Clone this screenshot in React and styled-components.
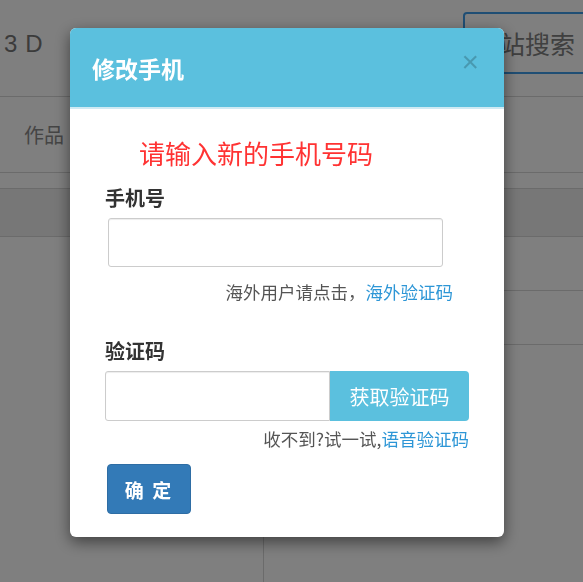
import React from 'react';
import styled, { createGlobalStyle } from 'styled-components';

const GlobalStyle = createGlobalStyle`
  html, body {
    margin: 0;
    padding: 0;
    background: #fff;
    font-family: "Noto Sans CJK SC", "Liberation Sans", sans-serif;
    overflow: hidden;
  }
  * { box-sizing: border-box; }
`;

// page behind the dialog
const Page = styled.div`
  width: 583px;
  height: 582px;
  display: flex;
  flex-direction: column;
  overflow: hidden;
`;

const TopBar = styled.div`
  height: 97px;
  display: flex;
  align-items: flex-start;
  justify-content: space-between;
  border-bottom: 1px solid #d6d6d6;
`;

const Brand = styled.div`
  margin: 30px 0 0 4px;
  font-size: 24px;
  letter-spacing: 8px;
  color: #777;
  font-family: "Liberation Sans", sans-serif;
`;

const SearchButton = styled.div`
  margin-top: 12px;
  width: 150px;
  margin-right: -30px;
  flex-shrink: 0;
  height: 62px;
  border: 2px solid #3f9de8;
  border-radius: 4px;
  display: flex;
  align-items: center;
  padding-left: 10px;
  font-size: 25px;
  color: #808080;
`;

const TabRow = styled.div`
  height: 76px;
  display: flex;
  align-items: center;
  padding-left: 24px;
  font-size: 20px;
  color: #8a8a8a;
  border-bottom: 1px solid #d6d6d6;
`;

const Strip = styled.div`
  height: ${(p) => p.$h}px;
  background: ${(p) => p.$bg || '#fff'};
  border-bottom: 1px solid #d6d6d6;
`;

const Columns = styled.div`
  flex: 1;
  display: grid;
  grid-template-columns: 264px 1fr;
`;

const Sidebar = styled.div`
  border-right: 1px solid #d6d6d6;
`;

const Rows = styled.div`
  display: flex;
  flex-direction: column;
`;

// dialog layer
const Backdrop = styled.div`
  position: fixed;
  inset: 0;
  background: rgba(0, 0, 0, 0.5);
`;

const Modal = styled.div`
  width: 434px;
  margin: 28px 0 0 70px;
  background: #fff;
  border-radius: 6px;
  box-shadow: 0 5px 15px rgba(0, 0, 0, 0.5);
  overflow: hidden;
`;

const Header = styled.div`
  height: 81px;
  background: #5bc0de;
  border-bottom: 2px solid #cfeaf3;
  display: flex;
  align-items: center;
  justify-content: space-between;
  padding: 0 25px 0 22px;
`;

const Title = styled.h4`
  margin: 0;
  font-size: 23px;
  font-weight: 700;
  color: #fff;
`;

const Close = styled.span`
  font-family: "Liberation Sans", sans-serif;
  font-size: 30px;
  line-height: 1;
  color: #000;
  opacity: 0.2;
  margin-top: -12px;
`;

const Body = styled.div`
  padding: 26px 35px 23px 35px;
`;

const Notice = styled.p`
  margin: 0 0 14px 34px;
  font-size: 26px;
  line-height: 36px;
  color: #ff3333;
`;

const Label = styled.div`
  font-size: 20px;
  font-weight: 700;
  color: #333;
  line-height: 26px;
  margin-bottom: 7px;
`;

const Input = styled.input`
  display: block;
  width: ${(p) => p.$w || 'auto'};
  flex: ${(p) => (p.$grow ? 1 : 'none')};
  min-width: 0;
  height: ${(p) => p.$h || 50}px;
  margin-left: ${(p) => p.$ml || 0}px;
  border: 1px solid #ccc;
  border-radius: ${(p) => p.$r || '3px'};
  box-shadow: inset 0 1px 1px rgba(0, 0, 0, 0.075);
  outline: none;
  font-size: 18px;
  padding: 0 12px;
`;

const Help = styled.div`
  text-align: right;
  padding-right: ${(p) => p.$pr || 0}px;
  margin-top: ${(p) => p.$mt || 0}px;
  margin-bottom: ${(p) => p.$mb || 0}px;
  font-size: 17.5px;
  line-height: 24px;
  color: #555;
`;

const Link = styled.a`
  color: #2d96d6;
  text-decoration: none;
`;

const InputGroup = styled.div`
  display: flex;
  height: 50px;
`;

const CodeButton = styled.button`
  flex: none;
  width: 139px;
  border: none;
  background: #5bc0de;
  color: #fff;
  font-family: inherit;
  font-size: 20px;
  white-space: nowrap;
  border-radius: 0 4px 4px 0;
  padding: 0;
`;

const Submit = styled.button`
  display: block;
  margin-left: 2px;
  width: 84px;
  height: 50px;
  border: 1px solid #2e6da4;
  border-radius: 4px;
  background: #337ab7;
  color: #fff;
  font-family: inherit;
  font-size: 19px;
  font-weight: 700;
  letter-spacing: 2px;
  padding: 0;
`;

export default function App() {
  return (
    <>
      <GlobalStyle />
      <Page>
        <TopBar>
          <Brand>3D</Brand>
          <SearchButton>全站搜索</SearchButton>
        </TopBar>
        <TabRow>作品</TabRow>
        <Strip $h={16} />
        <Strip $h={48} $bg="#eee" />
        <Columns>
          <Sidebar />
          <Rows>
            <Strip $h={54} />
            <Strip $h={54} />
          </Rows>
        </Columns>
      </Page>

      <Backdrop>
        <Modal>
          <Header>
            <Title>修改手机</Title>
            <Close>×</Close>
          </Header>
          <Body>
            <Notice>请输入新的手机号码</Notice>
            <Label>手机号</Label>
            <Input $w="335px" $ml={3} $h={49} />
            <Help $pr={16} $mt={13} $mb={34}>
              海外用户请点击，<Link>海外验证码</Link>
            </Help>
            <Label>验证码</Label>
            <InputGroup>
              <Input $grow $r="3px 0 0 3px" $h={50} />
              <CodeButton>获取验证码</CodeButton>
            </InputGroup>
            <Help $mt={6} $mb={13}>
              收不到?试一试,<Link>语音验证码</Link>
            </Help>
            <Submit>确 定</Submit>
          </Body>
        </Modal>
      </Backdrop>
    </>
  );
}
